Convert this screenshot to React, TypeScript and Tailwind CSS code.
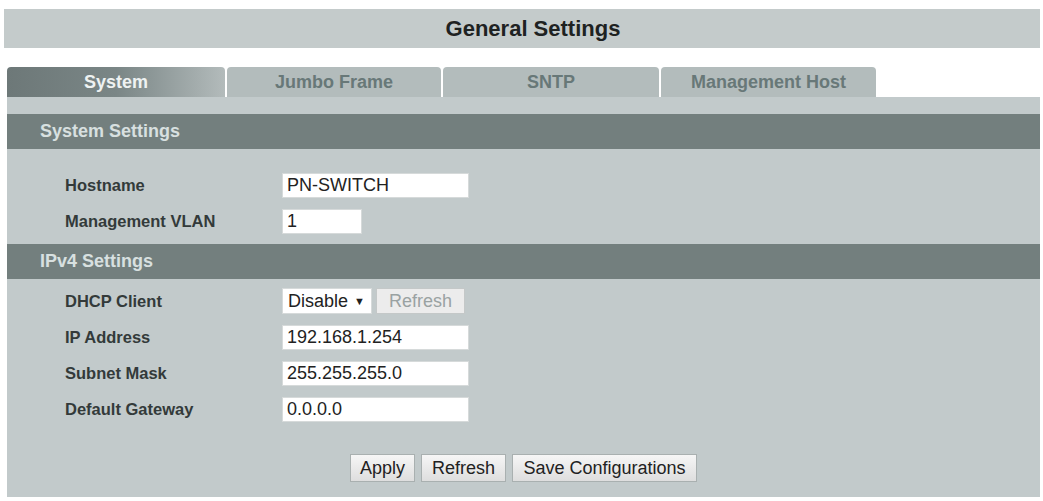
const tabs = [
  { label: "System", width: "w-[218px]", active: true },
  { label: "Jumbo Frame", width: "w-[214px]", active: false },
  { label: "SNTP", width: "w-[216px]", active: false },
  { label: "Management Host", width: "w-[215px]", active: false },
];

function SectionHeader({ title }: { title: string }) {
  return (
    <div className="flex h-[35px] items-center bg-[#737f7e] pl-[33px] text-[18px] font-bold text-[#d8e0e0]">
      {title}
    </div>
  );
}

function Row({ label, children }: { label: string; children: React.ReactNode }) {
  return (
    <div className="flex items-center">
      <div className="w-[275px] pl-[58px] text-[16.5px] font-bold text-[#333a3a]">{label}</div>
      {children}
    </div>
  );
}

function TextBox({ value, width = "w-[187px]" }: { value: string; width?: string }) {
  return (
    <input
      type="text"
      defaultValue={value}
      readOnly
      className={`h-[25px] ${width} border border-[#d6dada] bg-white px-[4px] text-[18px] text-[#222] outline-none`}
    />
  );
}

function Button({ label, width }: { label: string; width: string }) {
  return (
    <button
      type="button"
      className={`h-[28px] ${width} border border-[#a9b0b0] bg-gradient-to-b from-[#f6f6f6] to-[#dedede] text-[18px] leading-none text-[#222]`}
    >
      {label}
    </button>
  );
}

export default function App() {
  return (
    <div className="h-[501px] w-full bg-white pt-[9px] font-['Liberation_Sans',Arial,sans-serif]">
      <div className="ml-[4px] mr-[3px] flex h-[39px] items-center justify-center bg-[#c4cbcb] pl-[22px] text-[22px] font-bold text-[#1e2222]">
        General Settings
      </div>

      <div className="ml-[7px] mt-[19px] flex gap-[2px]">
        {tabs.map((tab) => (
          <div
            key={tab.label}
            className={`flex h-[30px] ${tab.width} items-center justify-center rounded-t-[4px] text-[18px] font-bold ${
              tab.active
                ? "bg-gradient-to-r from-[#6d7878] via-[#7a8686] to-[#b3bbbb] text-[#eef2f2]"
                : "bg-[#b3bcbc] text-[#687878]"
            }`}
          >
            {tab.label}
          </div>
        ))}
      </div>

      <div className="ml-[7px] mr-[3px] h-[400px] bg-[#c2cacb] pt-[17px]">
        <SectionHeader title="System Settings" />

        <div className="flex flex-col gap-[11px] pt-[24px] pb-[10px]">
          <Row label="Hostname">
            <TextBox value="PN-SWITCH" />
          </Row>
          <Row label="Management VLAN">
            <TextBox value="1" width="w-[80px]" />
          </Row>
        </div>

        <SectionHeader title="IPv4 Settings" />

        <div className="flex flex-col gap-[11px] pt-[9px]">
          <Row label="DHCP Client">
            <div className="flex h-[26px] w-[90px] items-center border border-[#d6dada] bg-white pl-[5px] text-[18px] text-[#222]">
              Disable
              <span className="ml-[6px] text-[11px]">▼</span>
            </div>
            <button
              type="button"
              disabled
              className="ml-[4px] h-[26px] w-[89px] border border-[#c4c8c8] bg-[#ececec] text-[18px] leading-none text-[#9aa2a2]"
            >
              Refresh
            </button>
          </Row>
          <Row label="IP Address">
            <TextBox value="192.168.1.254" />
          </Row>
          <Row label="Subnet Mask">
            <TextBox value="255.255.255.0" />
          </Row>
          <Row label="Default Gateway">
            <TextBox value="0.0.0.0" />
          </Row>
        </div>

        <div className="mt-[32px] flex justify-center gap-[6px]">
          <Button label="Apply" width="w-[65px]" />
          <Button label="Refresh" width="w-[85px]" />
          <Button label="Save Configurations" width="w-[185px]" />
        </div>
      </div>
    </div>
  );
}
